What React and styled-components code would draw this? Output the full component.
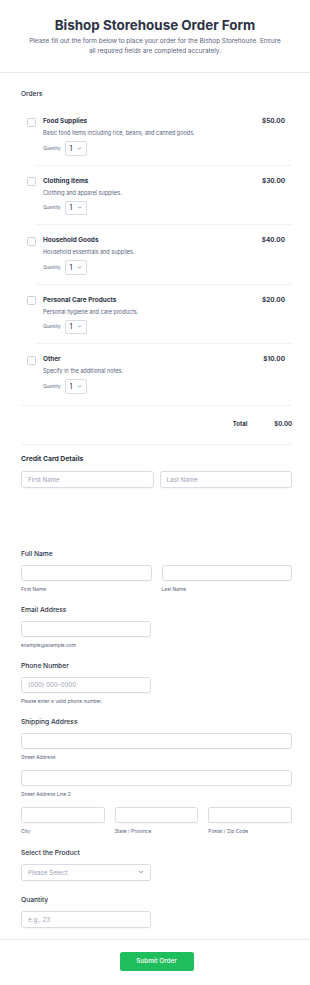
import React from "react";
import styled, { createGlobalStyle } from "styled-components";

const GlobalStyle = createGlobalStyle`
  * { box-sizing: border-box; }
  body {
    margin: 0;
    background: #fff;
    font-family: Inter, "Noto Sans", sans-serif;
    color: #2c3345;
  }
`;

const Page = styled.div`
  width: 310px;
  background: #fff;
`;

const Header = styled.header`
  padding: 16px 20px 16px;
  text-align: center;
  border-bottom: 1px solid #eaebf0;

  h1 {
    margin: 0;
    font-size: 13.4px;
    line-height: 18px;
    font-weight: 700;
    color: #2c3345;
  }
  p {
    margin: 2px 0 0;
    font-size: 6.4px;
    line-height: 10px;
    color: #57647e;
  }
`;

const Section = styled.section`
  padding: 0 18px 0 21px;
`;

const SectionTitle = styled.div`
  font-size: ${({ $bold }) => ($bold ? "6.8px" : "6.6px")};
  font-weight: ${({ $bold }) => ($bold ? 700 : 500)};
  line-height: 10px;
  color: #2c3345;
  margin-top: ${({ $top }) => $top || 0}px;
`;

const Item = styled.div`
  padding: 11px 7px 9px 6px;
  display: flex;
  gap: 7px;
`;

const Checkbox = styled.span`
  flex: none;
  width: 9px;
  height: 9px;
  margin-top: 0.5px;
  border: 1px solid #c9cfdb;
  border-radius: 1.5px;
  background: #fff;
`;

const ItemBody = styled.div`
  flex: 1;
`;

const ItemHead = styled.div`
  display: flex;
  justify-content: space-between;
  font-size: 6.4px;
  line-height: 9px;
  font-weight: 700;
  color: #2c3345;
`;

const ItemDesc = styled.div`
  margin-top: 3px;
  font-size: 5.5px;
  line-height: 8px;
  color: #57647e;
`;

const QtyRow = styled.div`
  margin-top: 4px;
  display: flex;
  align-items: center;
  gap: 4px;
  font-size: 4.4px;
  color: #57647e;
`;

const QtySelect = styled.div`
  width: 22px;
  height: 14.5px;
  border: 1px solid #d8dce4;
  border-radius: 2px;
  display: flex;
  align-items: center;
  justify-content: space-between;
  padding: 0 4px 0 4px;
  font-size: 7px;
  color: #2c3345;
`;

const Separator = styled.div`
  height: 1px;
  background: #f1f2f5;
  margin-left: ${({ $inset }) => $inset || 0}px;
`;

const TotalRow = styled.div`
  display: flex;
  justify-content: flex-end;
  gap: 27px;
  padding: 13px 0 15px;
  font-size: 6px;
  line-height: 10px;
  font-weight: 700;
  color: #2c3345;
`;

const Row = styled.div`
  display: grid;
  grid-template-columns: repeat(${({ $cols }) => $cols || 2}, 1fr);
  column-gap: ${({ $gap }) => $gap ?? 10}px;
  margin-top: ${({ $top }) => $top || 0}px;
`;

const Input = styled.div`
  height: ${({ $h }) => $h || 16}px;
  border: 1px solid #d8dce4;
  border-radius: 2.5px;
  box-shadow: 0 1px 1px rgba(44, 51, 69, 0.03);
  display: flex;
  align-items: center;
  justify-content: space-between;
  padding: 0 6px;
  font-size: 6.2px;
  color: #9aa1b2;
  width: ${({ $half }) => ($half ? "130px" : "auto")};
  margin-top: ${({ $top }) => $top || 0}px;
`;

const Field = styled.div`
  margin-top: ${({ $top }) => $top ?? 12}px;
`;

const Label = styled.div`
  font-size: 6.7px;
  line-height: 10px;
  font-weight: 500;
  color: ${({ $blue }) => ($blue ? "#24314f" : "#2c3345")};
  margin-bottom: 6px;
`;

const Sub = styled.div`
  margin-top: 4px;
  font-size: 4.9px;
  line-height: 8px;
  color: #57647e;
`;

const Footer = styled.div`
  margin-top: 11px;
  border-top: 1px solid #eaebf0;
  padding: 12px 0 17px 3px;
  display: flex;
  justify-content: center;
`;

const SubmitButton = styled.button`
  width: 74px;
  height: 19px;
  border: none;
  border-radius: 2.5px;
  background: #1fbd5b;
  color: #fff;
  font-family: Inter, sans-serif;
  font-size: 6.4px;
  font-weight: 500;
`;

const Chevron = ({ size = 5 }) => (
  <svg width={size} height={size} viewBox="0 0 10 10" fill="none">
    <path d="M2.5 3.8 L5 6.3 L7.5 3.8" stroke="#57647e" strokeWidth="1.3" strokeLinecap="round" strokeLinejoin="round" />
  </svg>
);

const products = [
  { name: "Food Supplies", desc: "Basic food items including rice, beans, and canned goods.", price: "$50.00" },
  { name: "Clothing Items", desc: "Clothing and apparel supplies.", price: "$30.00" },
  { name: "Household Goods", desc: "Household essentials and supplies.", price: "$40.00" },
  { name: "Personal Care Products", desc: "Personal hygiene and care products.", price: "$20.00" },
  { name: "Other", desc: "Specify in the additional notes.", price: "$10.00" },
];

export default function App() {
  return (
    <Page>
      <GlobalStyle />
      <Header>
        <h1>Bishop Storehouse Order Form</h1>
        <p>
          Please fill out the form below to place your order for the Bishop Storehouse. Ensure
          <br />
          all required fields are completed accurately.
        </p>
      </Header>

      <Section>
        <SectionTitle $top={16}>Orders</SectionTitle>
        <div style={{ height: 7 }} />
        {products.map((p, i) => (
          <React.Fragment key={p.name}>
            <Item>
              <Checkbox />
              <ItemBody>
                <ItemHead>
                  <span>{p.name}</span>
                  <span>{p.price}</span>
                </ItemHead>
                <ItemDesc>{p.desc}</ItemDesc>
                <QtyRow>
                  <span>Quantity</span>
                  <QtySelect>
                    <span>1</span>
                    <Chevron size={5} />
                  </QtySelect>
                </QtyRow>
              </ItemBody>
            </Item>
            {i < products.length - 1 && <Separator $inset={14} />}
          </React.Fragment>
        ))}
        <div style={{ height: 2 }} />
        <Separator />
        <TotalRow>
          <span>Total</span>
          <span>$0.00</span>
        </TotalRow>
        <Separator />

        <SectionTitle $bold $top={9}>Credit Card Details</SectionTitle>
        <Row $gap={6} $top={7}>
          <Input $h={17}>First Name</Input>
          <Input $h={17}>Last Name</Input>
        </Row>

        <Field $top={61}>
          <Label $blue>Full Name</Label>
          <Row>
            <div>
              <Input />
              <Sub>First Name</Sub>
            </div>
            <div>
              <Input />
              <Sub>Last Name</Sub>
            </div>
          </Row>
        </Field>

        <Field>
          <Label>Email Address</Label>
          <Input $half />
          <Sub>example@example.com</Sub>
        </Field>

        <Field>
          <Label>Phone Number</Label>
          <Input $half>(000) 000-0000</Input>
          <Sub>Please enter a valid phone number.</Sub>
        </Field>

        <Field>
          <Label>Shipping Address</Label>
          <Input />
          <Sub>Street Address</Sub>
          <Input $top={9} />
          <Sub>Street Address Line 2</Sub>
          <Row $cols={3} $top={9}>
            <div>
              <Input />
              <Sub>City</Sub>
            </div>
            <div>
              <Input />
              <Sub>State / Province</Sub>
            </div>
            <div>
              <Input />
              <Sub>Postal / Zip Code</Sub>
            </div>
          </Row>
        </Field>

        <Field $top={13}>
          <Label>Select the Product</Label>
          <Input $half $h={17}>
            <span>Please Select</span>
            <Chevron size={6} />
          </Input>
        </Field>

        <Field $top={14}>
          <Label>Quantity</Label>
          <Input $half $h={17}>e.g., 23</Input>
        </Field>
      </Section>

      <Footer>
        <SubmitButton type="button">Submit Order</SubmitButton>
      </Footer>
    </Page>
  );
}
